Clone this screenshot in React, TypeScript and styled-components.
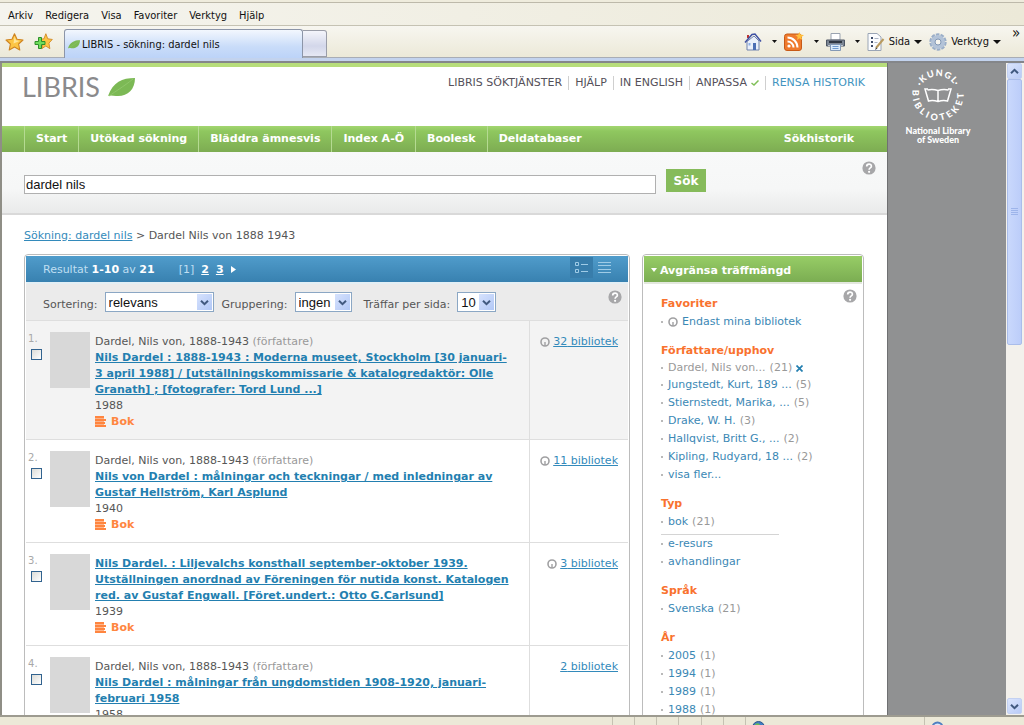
import React from 'react';
import styled, { createGlobalStyle, css } from 'styled-components';

const ui = '"DejaVu Sans Condensed", "DejaVu Sans", sans-serif';
const body = '"DejaVu Sans", sans-serif';
const field = '"Liberation Sans", Arial, sans-serif';

const Global = createGlobalStyle`
  *, *::before, *::after { box-sizing: border-box; }
  html, body { margin: 0; height: 100%; }
  body { font-family: ${body}; font-size: 11px; color: #565656; background: #ece9d8; overflow: hidden; }
  #root { height: 100%; }
  ul, h1, h2, h3, p { margin: 0; padding: 0; list-style: none; font-size: inherit; }
  button { font: inherit; border: 0; padding: 0; background: none; color: inherit; }
  svg { display: block; flex: none; }
`;

/* ---------- browser window ---------- */
const Window = styled.div`
  height: 100vh;
  display: flex;
  flex-direction: column;
  overflow: hidden;
`;
const TitleEdge = styled.div`
  height: 3px;
  flex: none;
  background: #efecdd;
  border-bottom: 1px solid #bdb9aa;
`;
const MenuBar = styled.nav`
  height: 23px;
  flex: none;
  display: flex;
  align-items: center;
  gap: 12px;
  padding: 2px 0 0 8px;
  font-family: ${ui};
  font-size: 11px;
  color: #111;
  background: linear-gradient(90deg, #f5f4ee, #ece9d8);
  border-bottom: 1px solid #c5c2b3;
`;
const ToolRow = styled.div`
  height: 32px;
  flex: none;
  display: flex;
  align-items: flex-end;
  font-family: ${ui};
  color: #111;
  background: linear-gradient(#f7f6f0, #ece9d8);
  border-bottom: 1px solid #a9adb5;
`;
const Stars = styled.div`
  align-self: center;
  display: flex;
  gap: 10px;
  padding: 0 11px 0 5px;
`;
const Tab = styled.button`
  display: flex;
  align-items: center;
  gap: 2px;
  width: 239px;
  height: 29px;
  padding-left: 3px;
  margin-bottom: -1px;
  color: #111;
  border: 1px solid #8c95a8;
  border-bottom: 0;
  border-radius: 3px 3px 0 0;
  background: linear-gradient(#f3f7fe, #c9dcf9 60%, #bcd3f8);
`;
const NewTab = styled.button`
  width: 24px;
  height: 27px;
  border: 1px solid #9a9da8;
  border-left: 0;
  border-radius: 0 3px 0 0;
  background: linear-gradient(#f4f5fb, #d3d7ea 60%, #e6e8f4);
`;
const Commands = styled.div`
  margin-left: auto;
  align-self: center;
  display: flex;
  align-items: center;
  gap: 7px;
  padding-right: 3px;
`;
const Command = styled.button`
  display: flex;
  align-items: center;
  gap: ${(p: { $gap?: number }) => p.$gap ?? 4}px;
`;
const Chevron = styled.span`
  align-self: flex-start;
  width: 13px;
  padding-left: 4px;
  font-size: 15px;
  line-height: 2px;
`;
const TabStrip = styled.div`
  height: 5px;
  flex: none;
  background: #c3d3ee;
  border-bottom: 2px solid #84868a;
`;
const Viewport = styled.div`
  flex: 1;
  min-height: 0;
  display: grid;
  grid-template-columns: minmax(0, 1fr) 119px 18px;
  grid-template-rows: minmax(0, 1fr);
  border-left: 2px solid #8f8e86;
  overflow: hidden;
`;
const StatusBar = styled.footer`
  height: 10px;
  flex: none;
  display: flex;
  justify-content: flex-end;
  background: #ece9d8;
  border-top: 2px solid #9d9b90;
  overflow: hidden;
`;
const StatusCell = styled.span`
  width: ${(p: { $w: number }) => p.$w}px;
  padding-left: 6px;
  padding-top: 4px;
  border-left: 1px solid #c5c2b2;
`;

/* ---------- scrollbar ---------- */
const ScrollTrack = styled.div`
  display: flex;
  flex-direction: column;
  padding: 0 2px 1px 0;
  background: #f3f1ec;
`;
const ScrollArrow = styled.button`
  height: 16px;
  width: 15px;
  margin-left: 1px;
  display: grid;
  place-items: center;
  border-radius: 2px;
  background: linear-gradient(135deg, #dbe5fd, #b9cbf6);
  border: 1px solid #c3d1f2;
`;
const ScrollThumb = styled.div`
  height: 266px;
  width: 15px;
  margin: 0 0 auto 1px;
  display: grid;
  place-items: center;
  border-radius: 2px;
  background: linear-gradient(90deg, #c9d8fc, #bccdf9);
  border: 1px solid #aabdea;
`;

/* ---------- page ---------- */
const Page = styled.div`
  background: #fff;
  overflow: hidden;
`;
const Side = styled.aside`
  display: flex;
  flex-direction: column;
  align-items: center;
  padding: 1px 18px 0 0;
  background: #909192;
  border-left: 1px solid #6f7072;
  color: #fff;
  font: 900 9px/9px Lato, sans-serif;
  text-align: center;
`;
const Header = styled.header`
  height: 63px;
  display: flex;
  justify-content: space-between;
  align-items: flex-start;
  padding: 7px 22px 0 20px;
  border-top: 4px solid #b7dd7b;
`;
const Logo = styled.a`
  display: flex;
  align-items: center;
  gap: 8px;
  color: #8a8a8c;
  font: 27px/26px Lato, sans-serif;
  text-decoration: none;
`;
const TopLinks = styled.nav`
  display: flex;
  align-items: center;
  padding-top: 2px;
`;
const TopLink = styled.a`
  display: flex;
  gap: 4px;
  align-items: center;
  padding: 0 6px;
  line-height: 14px;
  text-decoration: none;
  color: ${(p: { $hot?: boolean }) => (p.$hot ? '#4394c0' : '#55505a')};
  &:not(:last-child) { border-right: 1px solid #cfcfcf; }
  &:last-child { padding-right: 0; }
`;
const Nav = styled.nav`
  height: 26px;
  display: flex;
  padding: 0 22px;
  background: linear-gradient(#a3d670, #8fc75f 20%, #7dac52);
`;
const NavItem = styled.a`
  padding: 0 11px;
  font-weight: bold;
  line-height: 26px;
  color: #fff;
  text-decoration: none;
  white-space: nowrap;
  border-left: 1px solid #b5da92;
  &:last-child { margin-left: auto; border: 0; }
`;
const Search = styled.form`
  height: 63px;
  display: flex;
  align-items: flex-start;
  padding: 9px 11px 0 22px;
  background: linear-gradient(#f8f9f9, #f6f7f7 60%, #e9eaea);
  border-bottom: 2px solid #d9d9d9;
`;
const SearchBox = styled.input`
  flex: 0 1 632px;
  min-width: 0;
  height: 19px;
  margin: 14px 10px 0 0;
  padding: 0 1px;
  font: 13px ${field};
  color: #111;
  background: #fff;
  border: 1px solid #b0b0b0;
  border-radius: 0;
  outline: 0;
`;
const SearchButton = styled.button`
  width: 40px;
  height: 23px;
  margin-top: 8px;
  color: #fff;
  font: bold 12px ${body};
  background: #86bb5b;
`;
const HelpSlot = styled.button`
  margin-left: auto;
`;
const SortHelp = styled(HelpSlot)`
  margin-top: -2px;
`;
const Crumbs = styled.p`
  padding: 13px 22px 11px;
  line-height: 15px;
  color: #565656;
`;
const Link = styled.a`
  color: #338abb;
`;
const Columns = styled.div`
  display: flex;
  align-items: flex-start;
  gap: 12px;
  padding: 0 23px 0 22px;
`;
const panel = css`
  border: 1px solid #bcbcbc;
  border-radius: 4px 4px 0 0;
  padding: 1px;
  background: #fff;
`;
const Results = styled.main`
  ${panel}
  flex: 1;
  min-width: 0;
`;
const Facets = styled.aside`
  ${panel}
  flex: none;
  width: 222px;
`;
const ResultsHead = styled.div`
  height: 26px;
  display: flex;
  align-items: center;
  padding: 1px 12px 0 17px;
  color: #bfdff2;
  background: linear-gradient(#509ccb, #3881b0);
  b { color: #fff; }
`;
const Pager = styled.nav`
  display: flex;
  align-items: center;
  gap: 7px;
  margin-left: 24px;
`;
const PageLink = styled.a`
  color: #fff;
  font-weight: bold;
`;
const ViewButton = styled.button`
  width: 23px;
  height: 21px;
  margin-bottom: 4px;
  display: grid;
  place-items: center;
  background: ${(p: { $on?: boolean }) => (p.$on ? '#387dab' : 'transparent')};
  &:first-of-type { margin-left: auto; }
`;
const SortBar = styled.div`
  height: 39px;
  display: flex;
  align-items: flex-start;
  padding: 8px 6px 0 17px;
  background: #ebebeb;
  border-top: 2px solid #e3eff5;
  border-bottom: 1px solid #dedede;
  label { line-height: 26px; margin-right: 7px; white-space: nowrap; }
`;
const SelectWrap = styled.span`
  position: relative;
  width: ${(p: { $w: number }) => p.$w}px;
  height: 20px;
  margin-right: ${(p: { $w: number; $after: number }) => p.$after}px;
`;
const Select = styled.select`
  appearance: none;
  width: 100%;
  height: 20px;
  padding: 0 3px;
  font: 13px ${field};
  color: #111;
  background: #fff;
  border: 1px solid #8ba7c4;
  border-radius: 0;
`;
const SelectArrow = styled.span`
  position: absolute;
  top: 2px;
  right: 2px;
  width: 15px;
  height: 16px;
  display: grid;
  place-items: center;
  pointer-events: none;
  background: linear-gradient(135deg, #d6e2fd, #b2c8f6);
`;
const Row = styled.li`
  display: grid;
  grid-template-columns: 24px 40px minmax(0, 1fr) 99px;
  line-height: 16px;
  background: ${(p: { $shade: boolean }) => (p.$shade ? '#f3f3f3' : '#fff')};
  border-bottom: 1px solid #dedede;
`;
const Marker = styled.label`
  padding: 12px 0 0 2px;
  font-size: 10px;
  line-height: 12px;
  color: #a8a8a8;
`;
const Tick = styled.input`
  appearance: none;
  display: block;
  width: 11px;
  height: 11px;
  margin: 4px 0 0 3px;
  background: linear-gradient(135deg, #dcdcd7, #fff);
  border: 1px solid #32638f;
`;
const Cover = styled.div`
  height: 56px;
  margin-top: 11px;
  background: #d8d8d8;
`;
const Record = styled.div`
  padding: 13px 5px 9px;
  white-space: nowrap;
`;
const Muted = styled.span`
  color: #999;
`;
const Title = styled.a`
  display: block;
  font-weight: bold;
  color: #237fb0;
`;
const Kind = styled.p`
  display: flex;
  align-items: center;
  gap: 5px;
  font-weight: bold;
  color: #ff8640;
  svg { margin-bottom: 2px; }
`;
const Holdings = styled.div`
  display: flex;
  justify-content: flex-end;
  align-items: flex-start;
  gap: 3px;
  padding: 13px 10px 0 0;
  border-left: 1px solid #dedede;
  svg { margin-top: 3px; }
`;
const FacetHead = styled.h2`
  height: 28px;
  display: flex;
  align-items: center;
  gap: 3px;
  padding: 2px 7px 0;
  color: #fff;
  font-size: 11px;
  background: linear-gradient(#97cd66, #7bad52);
  border-bottom: 2px solid #e3e8de;
`;
const FacetBody = styled.div`
  position: relative;
  display: flex;
  flex-direction: column;
  gap: 11px;
  padding: 11px 17px;
  line-height: 18px;
`;
const FacetHelp = styled.button`
  position: absolute;
  top: 5px;
  right: 5px;
`;
const FacetTitle = styled.h3`
  color: #f9722e;
`;
const FacetItem = styled.li`
  display: flex;
  align-items: center;
  gap: 4px;
  color: #999;
  line-height: ${(p: { $current?: boolean }) => (p.$current ? 16 : 18)}px;
  &::before { content: ''; width: 2px; height: 2px; margin-right: 1px; background: #b9b9b9; }
  a { color: #3b88b5; text-decoration: none; }
`;
const FacetRule = styled.li`
  width: 118px;
  height: 1px;
  margin-top: 3px;
  background: #d4d4d4;
`;

/* ---------- icons ---------- */
const Leaf = ({ w = 27, h = 19 }: { w?: number; h?: number }) => (
  <svg width={w} height={h} viewBox="0 0 27 19" aria-hidden="true">
    <path d="M0 18C5 4 14 0 27 0c0 12-8 19-19 18-3 0-5-1-8 0z" fill="#7cb955" />
    <path d="M1 18C8 13 15 9 25 1" stroke="#8fc76a" fill="none" />
  </svg>
);
const Help = () => (
  <svg width="14" height="14" viewBox="0 0 14 14" role="img" aria-label="?">
    <circle cx="7" cy="7" r="6.6" fill="#a7a7a9" />
    <path d="M4.7 5.4C4.7 2.3 9.5 2.4 9.4 5.2 9.4 6.9 7.1 6.8 7.1 8.7" fill="none" stroke="#fff" strokeWidth="1.7" />
    <circle cx="7.1" cy="10.8" r="1.1" fill="#fff" />
  </svg>
);
const Mine = () => (
  <svg width="10" height="10" viewBox="0 0 10 10" aria-hidden="true">
    <circle cx="5" cy="5" r="4" fill="none" stroke="#a0a0a2" strokeWidth="1.6" />
    <path d="M5 5v4" fill="none" stroke="#a0a0a2" strokeWidth="1.4" />
  </svg>
);
const Down = ({ w = 8, h = 4, c = '#111' }: { w?: number; h?: number; c?: string }) => (
  <svg width={w} height={h} viewBox="0 0 7 4" preserveAspectRatio="none" aria-hidden="true"><path d="M0 0h7L3.5 4z" fill={c} /></svg>
);
const Angle = ({ up = false }: { up?: boolean }) => (
  <svg width="9" height="7" viewBox="0 0 9 7" aria-hidden="true">
    <path d={up ? 'M1 5.2 4.5 1.8 8 5.2' : 'M1 1.8 4.5 5.2 8 1.8'} fill="none" stroke="#41597f" strokeWidth="2" />
  </svg>
);
const Book = () => (
  <svg width="11" height="11" viewBox="0 0 11 11" aria-hidden="true">
    <path d="M0 0h9v2H0zM0 3h11v2H0zM0 6h10v2H0zM0 9h11v2H0z" fill="#ff8640" />
    <path d="M0 0h9v11H0z" fill="#ff8640" opacity=".6" />
  </svg>
);
const STAR = 'M9 .8l2.5 5.5 6 .7-4.4 4 1.2 6L9 14.1 3.7 17l1.2-6L.5 7l6-.7z';
const Star = () => (
  <svg width="19" height="18" viewBox="0 0 18 18" aria-hidden="true">
    <path d={STAR} fill="#fcc544" stroke="#cf8420" strokeWidth="1.1" strokeLinejoin="round" />
    <path d="M9 3.5l1.5 3.8 3.5.7-6 2.5z" fill="#ffe69a" />
  </svg>
);
const AddStar = () => (
  <svg width="19" height="18" viewBox="0 0 19 18" aria-hidden="true">
    <path d={STAR} fill="#fcc544" stroke="#cf8420" transform="translate(5 0) scale(.76 .92)" />
    <path d="M4.5 4.5h3v4H11v3H7.500v4h-3v-4H1v-3h3.500z" fill="#6fdc5b" stroke="#2f8f2a" />
  </svg>
);
const House = () => (
  <svg width="18" height="18" viewBox="0 0 18 18" aria-hidden="true">
    <path d="M3 2h2v3H3z" fill="#b33" />
    <path d="M3 8.5 10 3l5 5v9H3z" fill="#eaf0fb" stroke="#7183ad" />
    <path d="M1 9.5 8 1.5l3-.5 6 7.5" fill="none" stroke="#3f51a3" strokeWidth="1.5" />
    <path d="M9 10h3v7H9z" fill="#4c6fb5" />
    <path d="M4.5 10h2v2.5h-2z" fill="#8fb0e6" />
  </svg>
);
const Feed = () => (
  <svg width="20" height="19" viewBox="0 0 20 19" aria-hidden="true">
    <rect x=".5" y="2" width="17" height="16.5" rx="2.5" fill="#ef7a2d" stroke="#c75a17" />
    <circle cx="5" cy="14" r="1.6" fill="#fff" />
    <path d="M3.5 9.5a6 6 0 0 1 6 6M3.5 5.5a10 10 0 0 1 10 10" fill="none" stroke="#fff" strokeWidth="2" />
    <path d="M15.5 0l1.2 2.8L20 3l-2.5 2 .8 3-2.8-1.7L13 8l.7-3-2.5-2 3-.2z" fill="#ffbf3d" />
  </svg>
);
const Printer = () => (
  <svg width="19" height="18" viewBox="0 0 19 18" aria-hidden="true">
    <path d="M5 .5h9V7H5z" fill="#fff" stroke="#9aa3b0" />
    <path d="M.5 7h18v6H.5z" fill="#7b8593" stroke="#4c5563" />
    <path d="M3 9h13" stroke="#2f3743" strokeWidth="2" />
    <path d="M2 12.5h15" stroke="#b9c2d0" />
    <path d="M4.5 11.5h10v6h-10z" fill="#dcecfa" stroke="#8399b5" />
    <path d="M6.5 13.5h6M6.5 15.5h6" stroke="#6f9bd0" />
  </svg>
);
const PageIcon = () => (
  <svg width="18" height="18" viewBox="0 0 18 18" aria-hidden="true">
    <path d="M1 .5h9l4 3.5v13.5H1z" fill="#fbfcfe" stroke="#9aa5b5" />
    <path d="M4 5h2M4 9h2M4 13h2" stroke="#3d4c68" strokeWidth="2" />
    <path d="M7.5 5.5h4M7.5 9.5h3" stroke="#aab4c4" />
    <path d="M9 15l7.5-9" stroke="#b99a5e" strokeWidth="2" />
    <path d="M8 17l1-2.5 1.5 1z" fill="#444" />
  </svg>
);
const Gear = () => (
  <svg width="18" height="18" viewBox="0 0 18 18" aria-hidden="true">
    <circle cx="9" cy="9" r="7.5" fill="none" stroke="#9aaec8" strokeWidth="2.4" strokeDasharray="3.6 1.11" />
    <circle cx="9" cy="9" r="5" fill="#e3ebf5" stroke="#b3c3d8" strokeWidth="4" />
    <circle cx="9" cy="9" r="3" fill="#f7f6f0" stroke="#8298b5" />
  </svg>
);
const LibraryLogo = () => (
  <svg width="62" height="62" viewBox="-31 -31 62 62" role="img" aria-label="Kungl. Biblioteket">
    <defs>
      <path id="ringTop" d="M-18 6A19 19 0 1 1 18 6" />
      <path id="ringBottom" d="M-22-13A25.500 25.500 0 1 0 22-13" />
    </defs>
    <g fill="#fff" fontFamily="Lato, sans-serif" fontWeight="900" fontSize="9" textAnchor="middle">
      <text letterSpacing="1"><textPath href="#ringTop" startOffset="50%">·KUNGL·</textPath></text>
      <text letterSpacing="3"><textPath href="#ringBottom" startOffset="50%">BIBLIOTEKET</textPath></text>
    </g>
    <path d="M0-4.500V6.500M-10-6h-3L-9.500 6Q-5 5 0 6.500 5 5 9.500 6L13-6h-3M-10.500-5Q-5-6 0-4.500 5-6 10.500-5" fill="none" stroke="#fff" strokeWidth="1.5" />
  </svg>
);

/* ---------- data ---------- */
const menu = ['Arkiv', 'Redigera', 'Visa', 'Favoriter', 'Verktyg', 'Hjälp'];
const nav = ['Start', 'Utökad sökning', 'Bläddra ämnesvis', 'Index A-Ö', 'Boolesk', 'Deldatabaser', 'Sökhistorik'];
const records = [
  { author: true, year: 1988, libs: 32, mine: true, title: ['Nils Dardel : 1888-1943 : Moderna museet, Stockholm [30 januari-', '3 april 1988] / [utställningskommissarie & katalogredaktör: Olle', 'Granath] ; [fotografer: Tord Lund ...]'] },
  { author: true, year: 1940, libs: 11, mine: true, title: ['Nils von Dardel : målningar och teckningar / med inledningar av', 'Gustaf Hellström, Karl Asplund'] },
  { author: false, year: 1939, libs: 3, mine: true, title: ['Nils Dardel. : Liljevalchs konsthall september-oktober 1939.', 'Utställningen anordnad av Föreningen för nutida konst. Katalogen', 'red. av Gustaf Engwall. [Föret.undert.: Otto G.Carlsund]'] },
  { author: true, year: 1958, libs: 2, mine: false, title: ['Nils Dardel : målningar från ungdomstiden 1908-1920, januari-', 'februari 1958'] },
];
type Facet = { name?: string; n?: number; current?: boolean; mine?: boolean; rule?: boolean };
const facets: { title: string; items: Facet[] }[] = [
  { title: 'Favoriter', items: [{ name: 'Endast mina bibliotek', mine: true }] },
  { title: 'Författare/upphov', items: [
    { name: 'Dardel, Nils von...', n: 21, current: true }, { name: 'Jungstedt, Kurt, 189 ...', n: 5 },
    { name: 'Stiernstedt, Marika, ...', n: 5 }, { name: 'Drake, W. H.', n: 3 },
    { name: 'Hallqvist, Britt G., ...', n: 2 }, { name: 'Kipling, Rudyard, 18 ...', n: 2 }, { name: 'visa fler...' }] },
  { title: 'Typ', items: [{ name: 'bok', n: 21 }, { rule: true }, { name: 'e-resurs' }, { name: 'avhandlingar' }] },
  { title: 'Språk', items: [{ name: 'Svenska', n: 21 }] },
  { title: 'År', items: [{ name: '2005', n: 1 }, { name: '1994', n: 1 }, { name: '1989', n: 1 }, { name: '1988', n: 1 }] },
];
const sorts = [
  { id: 'sort', label: 'Sortering:', value: 'relevans', w: 109, after: 8 },
  { id: 'group', label: 'Gruppering:', value: 'ingen', w: 57, after: 12 },
  { id: 'hits', label: 'Träffar per sida:', value: '10', w: 39, after: 0 },
];

export default function App() {
  return (
    <Window>
      <Global />
      <TitleEdge />
      <MenuBar>{menu.map((m) => <Command key={m}>{m}</Command>)}</MenuBar>
      <ToolRow>
        <Stars><button aria-label="Favoriter"><Star /></button><button aria-label="Lägg till"><AddStar /></button></Stars>
        <Tab><Leaf w={12} h={9} />LIBRIS - sökning: dardel nils</Tab>
        <NewTab aria-label="Ny flik" />
        <Commands>
          <Command $gap={10} aria-label="Startsida"><House /><Down w={5} h={3} /></Command>
          <Command $gap={10} aria-label="Feeds"><Feed /><Down w={5} h={3} /></Command>
          <Command $gap={10} aria-label="Skriv ut"><Printer /><Down w={5} h={3} /></Command>
          <Command><PageIcon />Sida <Down /></Command>
          <Command><Gear />Verktyg <Down /></Command>
          <Chevron>»</Chevron>
        </Commands>
      </ToolRow>
      <TabStrip />
      <Viewport>
        <Page>
          <Header>
            <Logo href="#">LIBRIS<Leaf /></Logo>
            <TopLinks>
              <TopLink href="#">LIBRIS SÖKTJÄNSTER</TopLink>
              <TopLink href="#">HJÄLP</TopLink>
              <TopLink href="#">IN ENGLISH</TopLink>
              <TopLink href="#">ANPASSA
                <svg width="8" height="6" viewBox="0 0 8 6" aria-hidden="true"><path d="M.5 3 3 5 7.5.5" fill="none" stroke="#7fbf57" strokeWidth="1.5" /></svg>
              </TopLink>
              <TopLink href="#" $hot>RENSA HISTORIK</TopLink>
            </TopLinks>
          </Header>
          <Nav>{nav.map((n) => <NavItem href="#" key={n}>{n}</NavItem>)}</Nav>
          <Search onSubmit={(e) => e.preventDefault()}>
            <SearchBox aria-label="Sök" defaultValue="dardel nils" />
            <SearchButton>Sök</SearchButton>
            <HelpSlot type="button" aria-label="Hjälp"><Help /></HelpSlot>
          </Search>
          <Crumbs><Link href="#">Sökning: dardel nils</Link> &gt; Dardel Nils von 1888 1943</Crumbs>
          <Columns>
            <Results>
              <ResultsHead>
                <span>Resultat <b>1-10</b> av <b>21</b></span>
                <Pager>
                  <span>[1]</span><PageLink href="#">2</PageLink><PageLink href="#">3</PageLink>
                  <svg width="5" height="7" viewBox="0 0 5 7" aria-hidden="true"><path d="M0 0l5 3.5L0 7z" fill="#fff" /></svg>
                </Pager>
                <ViewButton $on aria-label="Detaljer">
                  <svg width="13" height="11" viewBox="0 0 13 11" aria-hidden="true"><path d="M.5.5h3v3h-3zM.5 7.5h3v3h-3zM6 2.5h7M6 9.5h7" fill="none" stroke="#9fcbe6" /></svg>
                </ViewButton>
                <ViewButton aria-label="Lista">
                  <svg width="13" height="11" viewBox="0 0 13 11" aria-hidden="true"><path d="M0 .5h13M0 3.5h13M0 7.5h13M0 10.5h13" stroke="#9fcbe6" /></svg>
                </ViewButton>
              </ResultsHead>
              <SortBar>
                {sorts.map((s) => (
                  <React.Fragment key={s.id}>
                    <label htmlFor={s.id}>{s.label}</label>
                    <SelectWrap $w={s.w} $after={s.after}>
                      <Select id={s.id}><option>{s.value}</option></Select>
                      <SelectArrow><Angle /></SelectArrow>
                    </SelectWrap>
                  </React.Fragment>
                ))}
                <SortHelp aria-label="Hjälp"><Help /></SortHelp>
              </SortBar>
              <ul>
                {records.map((r, i) => (
                  <Row key={i} $shade={i === 0}>
                    <Marker>{i + 1}.<Tick type="checkbox" /></Marker>
                    <Cover />
                    <Record>
                      {r.author && <p>Dardel, Nils von, 1888-1943 <Muted>(författare)</Muted></p>}
                      <Title href="#">{r.title.map((t, k) => <React.Fragment key={k}>{k > 0 && <br />}{t}</React.Fragment>)}</Title>
                      <p>{r.year}</p>
                      <Kind><Book />Bok</Kind>
                    </Record>
                    <Holdings>{r.mine && <Mine />}<Link href="#">{r.libs} bibliotek</Link></Holdings>
                  </Row>
                ))}
              </ul>
            </Results>
            <Facets>
              <FacetHead><Down w={6} h={4} c="#fff" />Avgränsa träffmängd</FacetHead>
              <FacetBody>
                <FacetHelp aria-label="Hjälp"><Help /></FacetHelp>
                {facets.map((f) => (
                  <section key={f.title}>
                    <FacetTitle>{f.title}</FacetTitle>
                    <ul>
                      {f.items.map((it, k) => it.rule ? <FacetRule key={k} /> : (
                        <FacetItem key={k} $current={it.current}>
                          {it.mine && <Mine />}
                          {it.current ? <span>{it.name}</span> : <a href="#">{it.name}</a>}
                          {it.n && <span>({it.n})</span>}
                          {it.current && (
                            <button aria-label="Ta bort"><svg width="7" height="7" viewBox="0 0 7 7" aria-hidden="true"><path d="M.5.5l6 6M6.5.5l-6 6" stroke="#237fb0" strokeWidth="1.7" /></svg></button>
                          )}
                        </FacetItem>
                      ))}
                    </ul>
                  </section>
                ))}
              </FacetBody>
            </Facets>
          </Columns>
        </Page>
        <Side>
          <LibraryLogo />
          National Library<br />of Sweden
        </Side>
        <ScrollTrack>
          <ScrollArrow aria-label="Upp"><Angle up /></ScrollArrow>
          <ScrollThumb>
            <svg width="7" height="8" viewBox="0 0 7 8" aria-hidden="true"><path d="M0 .5h7M0 2.5h7M0 4.5h7M0 6.5h7" stroke="#9db4ea" /></svg>
          </ScrollThumb>
          <ScrollArrow aria-label="Ned"><Angle /></ScrollArrow>
        </ScrollTrack>
      </Viewport>
      <StatusBar>
        <StatusCell $w={22} /><StatusCell $w={22} /><StatusCell $w={22} /><StatusCell $w={23} /><StatusCell $w={22} /><StatusCell $w={22} />
        <StatusCell $w={179}>
          <svg width="13" height="13" viewBox="0 0 13 13" aria-hidden="true"><circle cx="6.5" cy="6.5" r="6" fill="#3f7fc4" stroke="#2b5688" /><path d="M3 3q4-2 5 1T4 6z" fill="#6dbb55" /></svg>
        </StatusCell>
        <StatusCell $w={100}>
          <svg width="13" height="13" viewBox="0 0 13 13" aria-hidden="true"><circle cx="6.5" cy="6.5" r="5" fill="#dce9fa" stroke="#4f7fc0" strokeWidth="2" /></svg>
        </StatusCell>
      </StatusBar>
    </Window>
  );
}
